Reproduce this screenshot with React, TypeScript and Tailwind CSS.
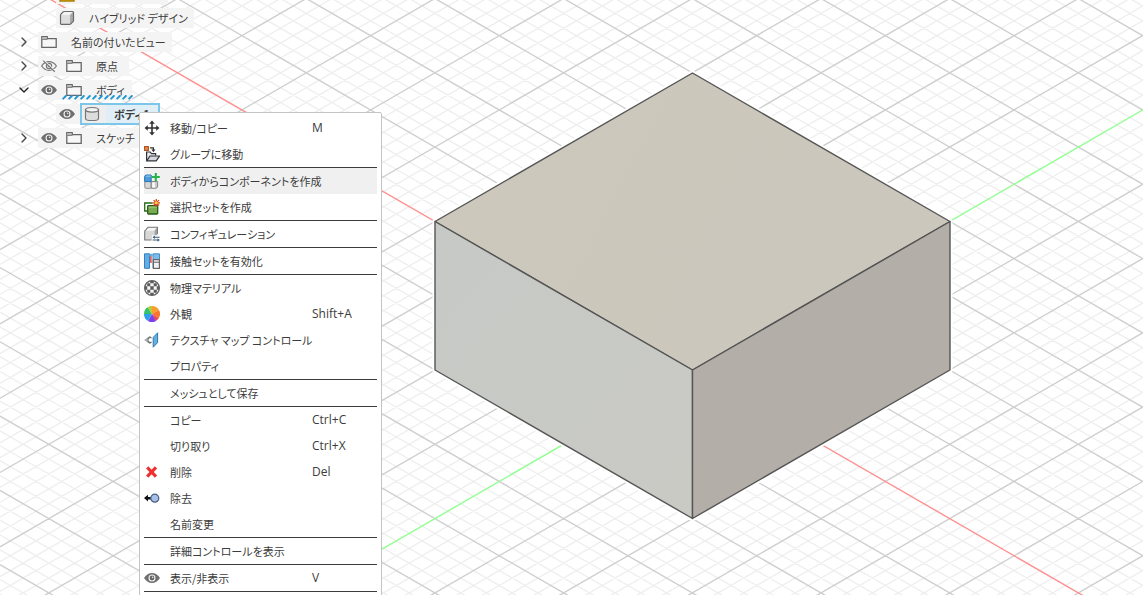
import type { ReactNode } from "react";
import { ChevronDown, ChevronRight } from "lucide-react";

/* ---------- Viewport ---------- */

const ORIGIN_X = 692.3;
const ORIGIN_Y = 370;
const SLOPE = 148.5 / 257.2;
const STEP = 14.86;

function gridLines(major: boolean): string {
  const parts: string[] = [];
  for (let k = -90; k <= 90; k++) {
    if (k === 0 || (k % 5 === 0) !== major) continue;
    for (const s of [SLOPE, -SLOPE]) {
      const y0 = ORIGIN_Y + k * STEP - s * ORIGIN_X;
      parts.push(`M0 ${y0.toFixed(2)}L1143 ${(y0 + s * 1143).toFixed(2)}`);
    }
  }
  return parts.join("");
}

function Viewport() {
  return (
    <svg
      className="absolute inset-0 h-full w-full"
      viewBox="0 0 1143 595"
      preserveAspectRatio="xMinYMin slice"
      role="img"
      aria-label="3D ビュー"
      fill="none"
    >
      <defs>
        <linearGradient id="top" x1="0" y1="0" x2="1" y2="0.3">
          <stop offset="0" stopColor="#cdc8bc" />
          <stop offset="1" stopColor="#cbc7bc" />
        </linearGradient>
        <linearGradient id="side" x1="0" y1="0" x2="1" y2="1">
          <stop offset="0" stopColor="#c7c9c6" />
          <stop offset="1" stopColor="#c9cac4" />
        </linearGradient>
      </defs>
      <path d={gridLines(false)} stroke="#efefef" strokeWidth="1.4" />
      <path d={gridLines(true)} stroke="#cfcfcf" strokeWidth="1.4" />
      <path d="M0 -29.7L1143 630.2" stroke="#ff9090" strokeWidth="1.4" />
      <path d="M0 769.7L1143 109.8" stroke="#90ff90" strokeWidth="1.4" />
      <path d="M692.5 73L950 221.5V370L692.5 518.5L435 370V221.5Z" stroke="#fff" strokeWidth="5" />
      <g stroke="#555" strokeWidth="1.4" strokeLinejoin="round">
        <path d="M692.5 73L950 221.5L692.5 370L435 221.5Z" fill="url(#top)" />
        <path d="M435 221.5L692.5 370V518.5L435 370Z" fill="url(#side)" />
        <path d="M950 221.5L692.5 370V518.5L950 370Z" fill="#b3aea8" />
      </g>
    </svg>
  );
}

/* ---------- Icons ---------- */

function Icon({ children }: { children?: ReactNode }) {
  return (
    <svg className="size-4 shrink-0" viewBox="0 0 16 16" fill="none" aria-hidden="true">
      {children}
    </svg>
  );
}

const EyeIcon = () => (
  <Icon>
    <path d="M0 8Q3.4 3 8 3T16 8Q12.6 13 8 13T0 8Z" fill="#6f6f6f" />
    <circle cx="8" cy="8" r="3.5" fill="#f4f4f4" />
    <circle cx="8" cy="8" r="2.4" fill="#666" />
    <circle cx="8.6" cy="7.4" r="0.8" fill="#ddd" />
  </Icon>
);

const EyeOffIcon = () => (
  <Icon>
    <path d="M0.6 8Q3.6 3.6 8 3.6T15.4 8Q12.4 12.4 8 12.4T0.6 8Z" stroke="#777" strokeWidth="1.2" />
    <circle cx="8" cy="8" r="2.6" stroke="#777" strokeWidth="1.2" />
    <circle cx="8" cy="8" r="1" fill="#777" />
    <path d="M3 2.6L14.4 13.6" stroke="#f4f4f4" strokeWidth="1.4" />
    <path d="M2.2 2.6L13.8 13.8" stroke="#777" strokeWidth="1.2" />
  </Icon>
);

const FolderIcon = () => (
  <Icon>
    <path d="M0.8 13.4V2.6H6.2V4.6H15.2V13.4Z" stroke="#666" strokeWidth="1.3" fill="#f7f7f7" />
    <path d="M1.5 3.2H5.6V5.4H1.5Z" fill="#bbb" />
    <path d="M1 5.4H6.2V4.6" stroke="#666" strokeWidth="0.8" />
  </Icon>
);

const CubeIcon = () => (
  <Icon>
    <path d="M1.5 5L4.5 1.6H14.5V11L11 14.4H1.5Z" fill="#ddd" />
    <path d="M1.5 5L4.5 1.6H14.5L11 5Z" fill="#f2f2f2" />
    <path d="M14.5 1.6V11L11 14.4V5Z" fill="#aaa" />
    <path d="M1.5 5.4Q1.5 4.8 2 4.2L4 2Q4.5 1.5 5.2 1.5H13.6Q14.5 1.5 14.5 2.4V10.4Q14.5 11 14 11.6L11.8 13.8Q11.2 14.4 10.5 14.4H2.4Q1.5 14.4 1.5 13.5Z" stroke="#6a6a6a" strokeWidth="1.2" />
  </Icon>
);

const DocIcon = () => (
  <Icon>
    <path d="M1 1H15V15H1Z" fill="#f7c516" stroke="#a77b00" strokeWidth="1.4" />
  </Icon>
);

const BodyIcon = () => (
  <Icon>
    <path d="M1.5 3.6V12.4C1.5 15.2 14.5 15.2 14.5 12.4V3.6Z" fill="#ddd" stroke="#777" strokeWidth="1.2" />
    <ellipse cx="8" cy="3.8" rx="6.5" ry="2.3" fill="#f5f5f5" stroke="#777" strokeWidth="1.2" />
  </Icon>
);

const MoveIcon = () => (
  <Icon>
    <path d="M8 2.5V13.5M2.5 8H13.5" stroke="#333" strokeWidth="1.6" />
    <path d="M8 0.5L10.8 3.8H5.2ZM8 15.5L5.2 12.2H10.8ZM0.5 8L3.8 5.2V10.8ZM15.5 8L12.2 10.8V5.2Z" fill="#333" />
  </Icon>
);

const GroupIcon = () => (
  <Icon>
    <rect x="0.6" y="0.6" width="3.8" height="3.8" fill="#f08a4b" stroke="#a9501f" strokeWidth="1.1" />
    <path d="M6 1.8H9.4V4.4" stroke="#333" strokeWidth="1.2" />
    <path d="M7.4 3.6H11.4L9.4 6.2Z" fill="#333" />
    <path d="M2.6 14.6V6H6.2L7.4 7.6H11.6V9.6" fill="#e8eaee" stroke="#2e3238" strokeWidth="1.2" />
    <path d="M2.8 14.8L6 10H15.6L12.2 14.8Z" fill="#d5d9df" stroke="#2e3238" strokeWidth="1.2" />
  </Icon>
);

const ComponentIcon = () => (
  <Icon>
    <rect x="0.8" y="8.5" width="6.4" height="6.8" rx="1.3" fill="#d9d9d9" stroke="#8c8c8c" />
    <path d="M7.2 8.5H13.6V13Q13.6 15.3 11.5 15.3H7.2Z" fill="#c9cdd1" stroke="#858585" />
    <path d="M8.3 9.5H10.8V14.5H8.3Z" fill="#fff" />
    <path d="M0.6 4Q0.6 2 2.6 2H7.2V8.6H0.6Z" fill="#4d9bd8" stroke="#2b76b5" />
    <path d="M1.4 3.8L2.8 2.6H6.6V3.8Z" fill="#8cc4ec" />
    <path d="M11.8 0V8M7.8 4H15.8" stroke="#27b24a" strokeWidth="2.1" />
  </Icon>
);

const SelectionIcon = () => (
  <Icon>
    <path d="M3 12H0.7V4H8.5" stroke="#2a6a1d" strokeWidth="1.3" />
    <rect x="3.7" y="6.7" width="10" height="8.3" rx="0.8" fill="#79ab52" stroke="#245b18" strokeWidth="1.3" />
    <path d="M4.6 8.2H12.8" stroke="#a7cb83" />
    <path d="M12.3 0V7.6M8.5 3.8H16M9.6 1.1L15 6.5M15 1.1L9.6 6.5" stroke="#d9441e" strokeWidth="1.3" />
    <circle cx="12.3" cy="3.8" r="1.5" fill="#ffd23c" />
  </Icon>
);

const ConfigIcon = () => (
  <Icon>
    <path d="M0.7 5L4 1.2H13.4V11L10 14H0.7Z" fill="#d7d7d7" />
    <path d="M1 4.8L4.2 1.4H13L10.4 4.8Z" fill="#f4f4f4" />
    <path d="M13.2 1.4V11L10.6 12V4.8Z" fill="#a5a5a5" />
    <path d="M7.5 14H0.7V5.2L4 1.2H13.4V8" stroke="#777" strokeWidth="1.1" />
    <path d="M8 9.2H16V16H8Z" fill="#fff" />
    <path d="M9 11.2H15.6M8.6 14H15" stroke="#4a5560" strokeWidth="1.1" />
    <path d="M8.4 11.2L11 9.4V13ZM16 14L13.4 12.2V15.8Z" fill="#3a6f9c" />
  </Icon>
);

const ContactIcon = () => (
  <Icon>
    <path d="M0.5 0.8H5.5V15.3H0.5Z" fill="#62ade4" stroke="#3681bd" />
    <path d="M5.5 0.8H8.5V3.5H5.5Z" fill="#62ade4" />
    <path d="M9 0.8H15.5V15H9Z" fill="#7dbbe8" stroke="#4a8fc6" />
    <path d="M6.9 3.2V10" stroke="#e03a35" strokeWidth="1.4" />
    <rect x="9.4" y="6.6" width="6" height="8.8" fill="#f2f2f2" stroke="#666" strokeWidth="1.2" />
    <path d="M9.4 9.2H15.4" stroke="#666" />
  </Icon>
);

const MaterialIcon = () => (
  <Icon>
    <circle cx="8" cy="8" r="7.3" fill="#f4f4f4" stroke="#666" strokeWidth="1.4" />
    <path
      d="M6.3 6.3H9.7V9.7H6.3ZM3.2 3.2H6.3V6.3H3.2ZM9.7 3.2H12.8V6.3H9.7ZM3.2 9.7H6.3V12.8H3.2ZM9.7 9.7H12.8V12.8H9.7ZM6.3 0.7H9.7V3.2H6.3ZM6.3 12.8H9.7V15.3H6.3ZM0.7 6.3H3.2V9.7H0.7ZM12.8 6.3H15.3V9.7H12.8Z"
      fill="#5c5c5c"
    />
  </Icon>
);

const AppearanceIcon = () => (
  <Icon>
    <path d="M8 8V0A8 8 0 0 1 14.9 4Z" fill="#fb9d2a" />
    <path d="M8 8L14.9 4A8 8 0 0 1 14.9 12Z" fill="#f9742c" />
    <path d="M8 8L14.9 12A8 8 0 0 1 11.5 15.2Z" fill="#f04a4a" />
    <path d="M8 8L11.9 15A8 8 0 0 1 4 15Z" fill="#7c3fee" />
    <path d="M8 8L4 15A8 8 0 0 1 0 8Z" fill="#2f9fe8" />
    <path d="M8 8H0A8 8 0 0 1 3.6 1.3Z" fill="#33c26b" />
    <path d="M8 8L3.6 1.3A8 8 0 0 1 8 0Z" fill="#b5cb3c" />
  </Icon>
);

const TextureIcon = () => (
  <Icon>
    <path d="M6.5 4.2L1.2 8L6.5 11.8" stroke="#999" strokeWidth="1.1" />
    <path d="M7.6 6A2.4 2.4 0 1 0 7.6 10" stroke="#666" strokeWidth="1.1" />
    <path d="M9.2 5.4L13.6 0.8V10.6L9.2 15.2Z" fill="#65afe0" stroke="#2f79ad" />
  </Icon>
);

const DeleteIcon = () => (
  <Icon>
    <path d="M3.2 3.4L12 12.6M12 3.4L3.2 12.6" stroke="#f03030" strokeWidth="3.1" />
  </Icon>
);

const RemoveIcon = () => (
  <Icon>
    <path d="M0 8L4 4.8V7H7V9.4H4V11.6Z" fill="#111" />
    <circle cx="10.8" cy="8.2" r="4" fill="#a5c0e8" stroke="#4c5f80" strokeWidth="1.2" />
  </Icon>
);

/* ---------- Browser tree ---------- */

type TreeRowProps = {
  expander?: "open" | "closed";
  label?: string;
  nested?: boolean;
  visibility?: "on" | "off";
  icon: ReactNode;
  underlined?: boolean;
  width: string;
};

function TreeRow({ expander, label, nested, visibility, icon, underlined, width }: TreeRowProps) {
  return (
    <li className="flex h-5 items-center">
      {expander ? (
        <button
          type="button"
          aria-label={`${label}を${expander === "open" ? "折りたたむ" : "展開"}`}
          className="flex w-8 shrink-0 justify-end"
        >
          {expander === "open" ? (
            <ChevronDown className="size-4 text-[#222]" />
          ) : (
            <ChevronRight className="size-4 text-[#444]" />
          )}
        </button>
      ) : (
        <span className="w-8 shrink-0" />
      )}
      <span className={nested ? "w-6 shrink-0" : "w-1.5 shrink-0"} />
      <div className={`relative flex h-5 shrink-0 items-center gap-[9px] bg-[#f4f4f4] pl-[3px] ${width}`}>
        {visibility && (
          <button type="button" aria-label={`${label}の表示切替`}>
            {visibility === "on" ? <EyeIcon /> : <EyeOffIcon />}
          </button>
        )}
        {icon}
        <span className="pl-[5px]">{label}</span>
        {underlined && (
          <svg className="absolute bottom-0 left-6 h-1.5 w-18" aria-hidden="true">
            <defs>
              <pattern id="dashes" width="6" height="6" patternUnits="userSpaceOnUse">
                <path d="M1.2 4.6L3.8 2" stroke="#1f97d4" strokeWidth="2" strokeLinecap="round" />
              </pattern>
            </defs>
            <rect width="100%" height="100%" fill="url(#dashes)" />
          </svg>
        )}
      </div>
    </li>
  );
}

function BrowserTree() {
  return (
    <ul className="relative -mt-4 flex flex-col gap-1">
      <TreeRow nested icon={<DocIcon />} width="w-28" />
      <TreeRow nested icon={<CubeIcon />} label="ハイブリッド デザイン" width="w-[138px]" />
      <TreeRow expander="closed" icon={<FolderIcon />} label="名前の付いたビュー" width="w-[134px]" />
      <TreeRow expander="closed" visibility="off" icon={<FolderIcon />} label="原点" width="w-[91px]" />
      <TreeRow expander="open" visibility="on" icon={<FolderIcon />} label="ボディ" width="w-[94px]" underlined />
      <li className="flex h-5 items-center pl-14">
        <button type="button" aria-label="ボディ1の表示切替" className="flex h-5 w-6 items-center bg-[#f4f4f4] pl-[3px]">
          <EyeIcon />
        </button>
        <button
          type="button"
          className="flex h-[22px] w-20 items-center border-2 border-[#7cc6ea] bg-[#e0eff7] font-bold"
        >
          <span className="flex h-full w-6 shrink-0 items-center bg-[#eeeeee] pl-0.5">
            <BodyIcon />
          </span>
          <span className="pl-2">ボディ1</span>
        </button>
      </li>
      <TreeRow expander="closed" visibility="on" icon={<FolderIcon />} label="スケッチ" width="w-28" />
    </ul>
  );
}

/* ---------- Context menu ---------- */

type MenuEntry = { label: string; shortcut?: string; icon?: ReactNode; active?: boolean };

const MENU_GROUPS: MenuEntry[][] = [
  [
    { label: "移動/コピー", shortcut: "M", icon: <MoveIcon /> },
    { label: "グループに移動", icon: <GroupIcon /> },
  ],
  [
    { label: "ボディからコンポーネントを作成", icon: <ComponentIcon />, active: true },
    { label: "選択セットを作成", icon: <SelectionIcon /> },
  ],
  [{ label: "コンフィギュレーション", icon: <ConfigIcon /> }],
  [{ label: "接触セットを有効化", icon: <ContactIcon /> }],
  [
    { label: "物理マテリアル", icon: <MaterialIcon /> },
    { label: "外観", shortcut: "Shift+A", icon: <AppearanceIcon /> },
    { label: "テクスチャ マップ コントロール", icon: <TextureIcon /> },
    { label: "プロパティ" },
  ],
  [{ label: "メッシュとして保存" }],
  [
    { label: "コピー", shortcut: "Ctrl+C" },
    { label: "切り取り", shortcut: "Ctrl+X" },
    { label: "削除", shortcut: "Del", icon: <DeleteIcon /> },
    { label: "除去", icon: <RemoveIcon /> },
    { label: "名前変更" },
  ],
  [{ label: "詳細コントロールを表示" }],
  [{ label: "表示/非表示", shortcut: "V", icon: <EyeIcon /> }],
];

function ContextMenu() {
  return (
    <div
      role="menu"
      className="absolute top-28 left-[139px] w-[243px] rounded-xs border border-[#c4c4c4] bg-white px-1 pt-0.5 pb-1"
    >
      {MENU_GROUPS.map((group) => (
        <div key={group[0].label} role="group" className="border-b border-[#3c3c3c]">
          {group.map((entry) => (
            <button
              key={entry.label}
              type="button"
              role="menuitem"
              className={`flex h-[26px] w-full items-center text-left ${entry.active ? "bg-[#f0f0f0]" : ""}`}
            >
              {entry.icon ?? <Icon />}
              <span className="w-[142px] shrink-0 pl-2.5 whitespace-nowrap">{entry.label}</span>
              {entry.shortcut && <span className="pl-2.5 font-['Open_Sans',sans-serif] text-xs">{entry.shortcut}</span>}
            </button>
          ))}
        </div>
      ))}
    </div>
  );
}

export default function App() {
  return (
    <main className="relative h-screen overflow-hidden bg-white font-['Noto_Sans_CJK_JP',sans-serif] text-[11px] leading-4 whitespace-nowrap text-[#3c3c3c] [font-feature-settings:'palt']">
      <Viewport />
      <BrowserTree />
      <ContextMenu />
    </main>
  );
}
